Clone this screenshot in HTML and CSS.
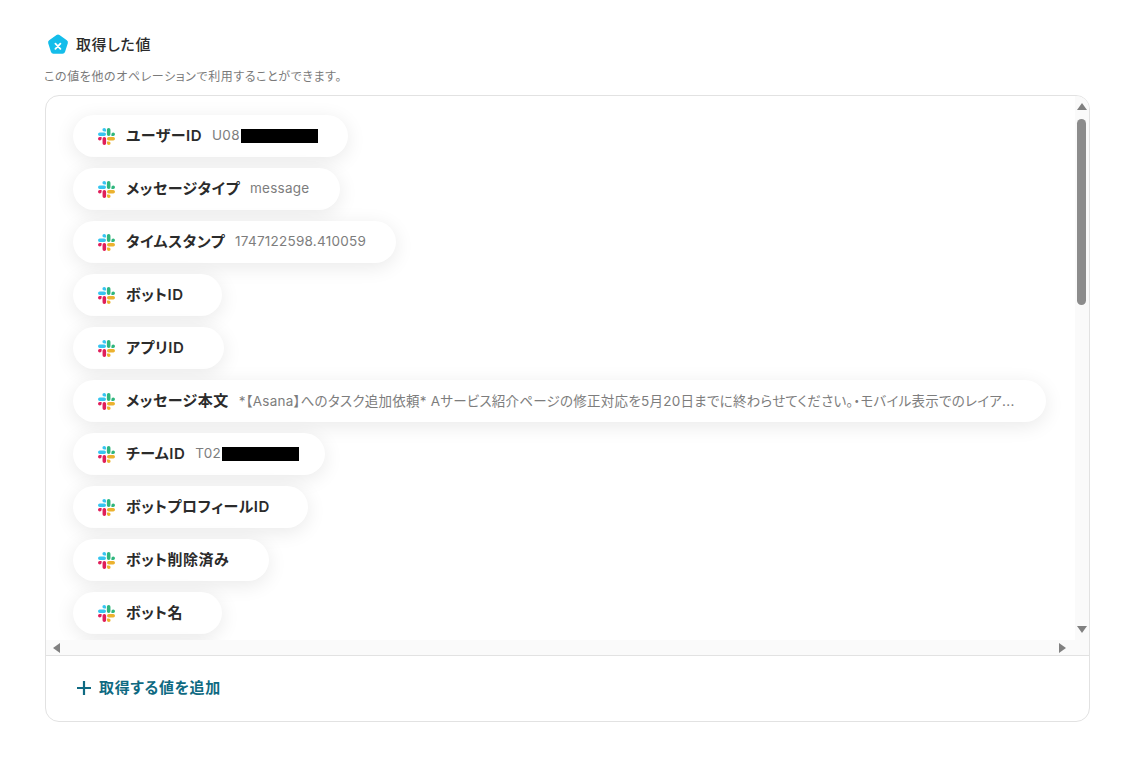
FILE: index.html
```html
<!DOCTYPE html>
<html lang="ja">
<head>
    <meta charset="UTF-8">
    <title>取得した値</title>
    <link rel="stylesheet" href="styles.css">
</head>
<body>
    <svg class="defs" width="0" height="0">
        <symbol id="slack" viewBox="0 0 54 54">
            <path fill="#36c5f0" d="M19.7 0a5.7 5.7 0 0 0 0 11.4h5.7V5.700A5.700 5.700 0 0 0 19.700 0zm0 14.400H5.700a5.700 5.700 0 0 0 0 11.400h14a5.700 5.700 0 0 0 0-11.400z"/>
            <path fill="#2eb67d" d="M54 20.100a5.700 5.700 0 0 0-11.400 0v5.700h5.700a5.700 5.700 0 0 0 5.700-5.700zm-14.400 0v-14.400a5.700 5.700 0 0 0-11.400 0v14.400a5.700 5.700 0 0 0 11.400 0z"/>
            <path fill="#ecb22e" d="M34.300 54a5.700 5.700 0 0 0 0-11.400h-5.700v5.700a5.700 5.700 0 0 0 5.700 5.700zm0-14.400h14a5.700 5.700 0 0 0 0-11.400h-14a5.700 5.700 0 0 0 0 11.400z"/>
            <path fill="#e01e5a" d="M0 33.900a5.700 5.700 0 0 0 11.400 0v-5.700H5.700A5.700 5.700 0 0 0 0 33.900zm14.400 0v14.400a5.700 5.700 0 0 0 11.400 0V33.900a5.700 5.700 0 0 0-11.400 0z"/>
        </symbol>
    </svg>

    <div class="title">
        <svg class="title-icon" width="22" height="22" viewBox="0 0 22 22">
            <path fill="#14bdea" d="M9.500 1.100a2.600 2.600 0 0 1 3 0l7.300 5.200a2.600 2.600 0 0 1 1 2.900l-2.800 8.700a2.600 2.600 0 0 1-2.500 1.800H6.500A2.600 2.600 0 0 1 4 18.100L1.200 9.200a2.600 2.600 0 0 1 1-2.900z"/>
            <path stroke="#fff" stroke-width="1.800" stroke-linecap="round" d="M8.400 9.600l5 5.200M13.400 9.600l-5 5.200"/>
        </svg>
        <h2>取得した値</h2>
    </div>
    <p class="note">この値を他のオペレーションで利用することができます。</p>

    <div class="card">
        <div class="scroll-area">
            <div class="pill w1"><svg class="slack"><use href="#slack"/></svg><b>ユーザーID</b><span class="val">U08</span><i class="mask"></i></div>
            <div class="pill w2"><svg class="slack"><use href="#slack"/></svg><b>メッセージタイプ</b><span class="val">message</span></div>
            <div class="pill w3"><svg class="slack"><use href="#slack"/></svg><b>タイムスタンプ</b><span class="val">1747122598.410059</span></div>
            <div class="pill w4"><svg class="slack"><use href="#slack"/></svg><b>ボットID</b></div>
            <div class="pill w5"><svg class="slack"><use href="#slack"/></svg><b>アプリID</b></div>
            <div class="pill w6"><svg class="slack"><use href="#slack"/></svg><b>メッセージ本文</b><span class="val">*【Asana】へのタスク追加依頼* Aサービス紹介ページの修正対応を5月20日までに終わらせてください。・モバイル表示でのレイア...</span></div>
            <div class="pill w7"><svg class="slack"><use href="#slack"/></svg><b>チームID</b><span class="val">T02</span><i class="mask"></i></div>
            <div class="pill w8"><svg class="slack"><use href="#slack"/></svg><b>ボットプロフィールID</b></div>
            <div class="pill w9"><svg class="slack"><use href="#slack"/></svg><b>ボット削除済み</b></div>
            <div class="pill w4"><svg class="slack"><use href="#slack"/></svg><b>ボット名</b></div>
            <div class="pill w4"></div>

            <!-- fake scrollbars -->
            <div class="track-v">
                <span class="arrow up"></span>
                <span class="thumb"></span>
                <span class="arrow down"></span>
            </div>
            <div class="track-h">
                <span class="arrow left"></span>
                <span class="arrow right"></span>
            </div>
        </div>
        <div class="card-foot">
            <svg width="16" height="16" viewBox="0 0 16 16"><path stroke="#0f6a82" stroke-width="2.200" d="M8 1v14M1 8h14"/></svg>
            <span>取得する値を追加</span>
        </div>
    </div>
</body>
</html>
```

FILE: styles.css
```css
body {
    margin: 0;
    padding: 33px 34px 0 44px;
    font-family: 'Inter', 'Noto Sans CJK JP', sans-serif;
    font-feature-settings: 'palt';
    color: #2b2b2b;
    background-color: #fff;
}

.defs {
    display: block;
}

.title {
    display: flex;
    align-items: center;
    gap: 7px;
    padding-left: 3px;
}

.title h2 {
    margin: 0;
    font-size: 15px;
    line-height: 24px;
    font-weight: 500;
    letter-spacing: 0.6px;
}

.note {
    margin: 12px 0 10px;
    font-size: 12px;
    line-height: 16px;
    letter-spacing: 0.6px;
    color: #7a7a7a;
}

.card {
    margin-left: 1px;
    height: 625px;
    border: 1px solid #e2e2e2;
    border-radius: 14px;
    overflow: hidden;
}

.scroll-area {
    position: relative;
    height: 560px;
    padding: 19px 0 0 27px;
    box-sizing: border-box;
    overflow: hidden;
    border-bottom: 1px solid #e2e2e2;
}

.pill {
    display: flex;
    align-items: center;
    box-sizing: border-box;
    height: 42px;
    margin-bottom: 11px;
    padding: 0 0 2px 25px;
    background-color: #fff;
    border-radius: 21px;
    box-shadow: 0 4px 20px rgba(0, 0, 0, 0.09);
    white-space: nowrap;
}

.w1 { width: 275px; }
.w2 { width: 267px; }
.w3 { width: 323px; }
.w4 { width: 149px; }
.w5 { width: 151px; }
.w6 { width: 973px; }
.w7 { width: 252px; }
.w8 { width: 235px; }
.w9 { width: 196px; }

.slack {
    flex: none;
    width: 17px;
    height: 17px;
    margin: 2px 11px 0 0;
}

.pill b {
    margin-bottom: 2px;
    font-size: 15px;
    font-weight: 600;
    letter-spacing: 0.5px;
}

.val {
    margin-left: 10px;
    font-size: 13.500px;
    letter-spacing: 0.25px;
    color: #7d7d7d;
}

.mask {
    width: 77px;
    height: 14px;
    margin: 1px 0 0 1px;
    background-color: #000;
}

.track-v {
    position: absolute;
    top: 0;
    right: 0;
    bottom: 0;
    width: 14px;
    background-color: #fafafa;
}

.track-h {
    position: absolute;
    left: 0;
    right: 0;
    bottom: 0;
    height: 15px;
    background-color: #fafafa;
}

.thumb {
    position: absolute;
    top: 23px;
    left: 2px;
    width: 9px;
    height: 186px;
    border-radius: 5px;
    background-color: #8c8c8c;
}

.arrow {
    position: absolute;
    width: 0;
    height: 0;
    border: 5px solid transparent;
}

.up { top: 7px; left: 2px; border-top: 0; border-bottom: 7px solid #808080; }
.down { bottom: 22px; left: 2px; border-bottom: 0; border-top: 7px solid #808080; }
.left { top: 3px; left: 7px; border-left: 0; border-right: 7px solid #808080; }
.right { top: 3px; right: 23px; border-right: 0; border-left: 7px solid #808080; }

.card-foot {
    display: flex;
    align-items: center;
    gap: 7px;
    padding: 22px 0 0 30px;
    font-size: 15px;
    line-height: 20px;
    font-weight: 600;
    letter-spacing: 0.65px;
    color: #0f6a82;
}
```
